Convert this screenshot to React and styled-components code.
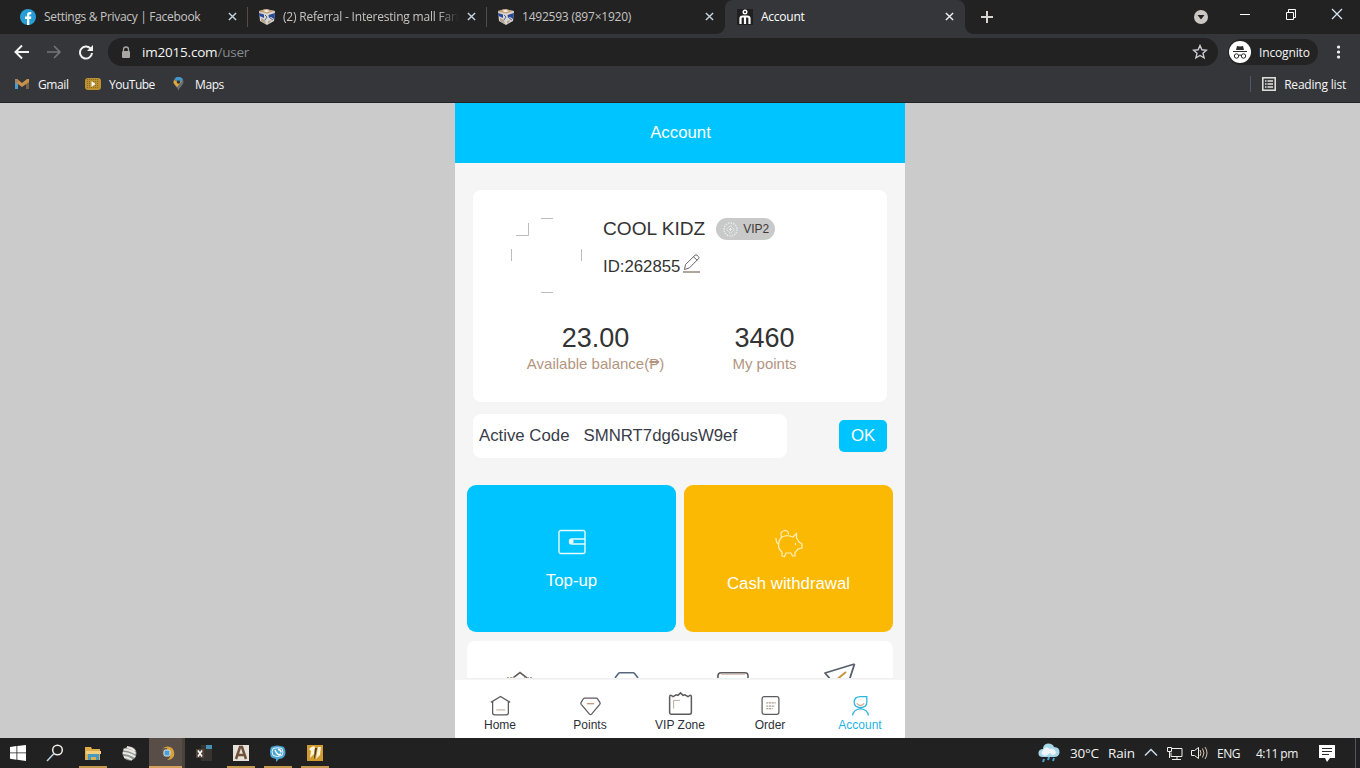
import React from 'react'
import styled, { createGlobalStyle, css } from 'styled-components'

const GlobalStyle = createGlobalStyle`
  * { box-sizing: border-box; }
  body { margin: 0; background: #cbcbcb; overflow: hidden; }
`

const Desktop = styled.div`
  width: 1360px;
  height: 768px;
  display: flex;
  flex-direction: column;
  background: #cbcbcb;
  font-family: "Open Sans", "Noto Sans", sans-serif;
  font-size: 12px;
  white-space: nowrap;
  svg { display: block; flex: none; }
`

// -------------------- browser ----------------

const TabStrip = styled.div`
  height: 34px;
  display: flex;
  background: #222222;
`

const Tab = styled.div`
  width: ${p => p.$w || 239}px;
  height: 34px;
  display: flex;
  align-items: center;
  padding: 0 11px 1px 20px;
  color: #c6c4c2;
  ${p => p.$inner && css`padding-left: 11px;`}
  ${p => p.$line && css`
    background: linear-gradient(#544c49, #544c49) right 7px / 1px 20px no-repeat;
  `}
  ${p => p.$active && css`
    padding-left: 12px;
    color: #ffffff;
    background: #35363a;
    border-radius: 8px 8px 0 0;
  `}
`

const TabTitle = styled.span`
  flex: 1;
  margin-left: 8px;
  margin-right: 6px;
  overflow: hidden;
  letter-spacing: ${p => p.$track || 0}px;
  ${p => p.$fade && css`
    margin-right: 8px;
    -webkit-mask-image: linear-gradient(90deg, #000 88%, transparent 100%);
    mask-image: linear-gradient(90deg, #000 88%, transparent 100%);
  `}
`

const TabFoot = styled.div`
  width: 8px;
  height: 8px;
  align-self: flex-end;
  background: radial-gradient(circle at ${p => (p.$left ? '0 0' : '100% 0')}, #222222 7.5px, #35363a 8px);
  margin-left: ${p => (p.$left ? '-8px' : '0')};
`

const NewTab = styled.div`
  flex: 1;
  display: flex;
  align-items: center;
  padding-left: 8px;
`

const WindowButtons = styled.div`
  display: flex;
  padding-right: 17px;
  padding-top: 8px;
`

const Toolbar = styled.div`
  height: 36px;
  display: flex;
  align-items: center;
  padding: 0 10px 0 14px;
  background: #35363a;
  color: #f4f4f4;
`

const AddressBar = styled.div`
  width: 1110px;
  height: 28px;
  margin-left: 14px;
  padding: 0 10px 0 12px;
  display: flex;
  align-items: center;
  border-radius: 14px;
  background: #222222;
  font-size: 13.5px;
`

const Url = styled.span`
  flex: 1;
  margin-left: 10px;
  letter-spacing: -0.2px;
  color: #f4f4f4;
  em { font-style: normal; color: #858991; }
`

const Incognito = styled.div`
  width: 90px;
  height: 26px;
  margin-left: 10px;
  display: flex;
  align-items: center;
  gap: 8px;
  padding-left: 1px;
  border-radius: 13px;
  background: #232324;
  letter-spacing: -0.15px;
`

const Bookmarks = styled.div`
  height: 33px;
  display: flex;
  align-items: flex-start;
  padding: 6px 14px 0 14px;
  background: #35363a;
  border-bottom: 1px solid #232427;
  color: #f6f6f6;
`

const Bookmark = styled.div`
  display: flex;
  align-items: center;
  width: ${p => (p.$w ? p.$w + 'px' : 'auto')};
  height: 16px;
  line-height: 15px;
  gap: 8px;
  letter-spacing: ${p => p.$track || 0}px;
`

const ReadingList = styled(Bookmark)`
  margin-left: auto;
  padding-left: 11px;
  border-left: 1px solid #4b5b69;
`

// -------------------- phone page ----------------

const Viewport = styled.main`
  height: 635px;
  display: flex;
  justify-content: center;
`

const Phone = styled.div`
  width: 450px;
  height: 635px;
  display: flex;
  flex-direction: column;
  background: #f5f5f5;
  color: #333333;
  font-family: "Liberation Sans", Arial, sans-serif;
  font-size: 16.8px;
`

const PageHeader = styled.header`
  height: 60px;
  display: flex;
  align-items: center;
  justify-content: center;
  padding-left: 1px;
  background: #00c4ff;
  color: #ffffff;
`

const Content = styled.div`
  height: 517px;
  padding: 27px 12px 0;
  overflow: hidden;
`

const Card = styled.section`
  height: 212px;
  margin: 0 6px;
  padding: 28px 38px 0;
  border-radius: 8px;
  background: #ffffff;
`

const Profile = styled.div`
  display: flex;
  height: 76px;
`

const Identity = styled.div`
  margin-left: 20px;
`

const NameLine = styled.div`
  display: flex;
  align-items: center;
  height: 22px;
  font-size: 19.1px;
`

const VipBadge = styled.span`
  width: 59px;
  height: 22px;
  margin-left: 11px;
  padding-left: 7px;
  display: flex;
  align-items: center;
  gap: 5px;
  border-radius: 11px;
  background: #c9c9c9;
  color: #3f3a38;
  font-size: 12px;
`

const IdLine = styled.div`
  display: flex;
  align-items: center;
  margin-top: 15px;
  gap: 3px;
  height: 22px;
  line-height: 22px;
  padding-top: 2px;
  svg { margin-top: -7px; }
`

const Stats = styled.div`
  display: flex;
  margin: 28px 0 0 0;
`

const Stat = styled.div`
  width: 169px;
  text-align: center;
`

const Amount = styled.div`
  height: 31px;
  line-height: 33px;
  font-size: 27px;
`

const Caption = styled.div`
  height: 20px;
  line-height: 22px;
  font-size: 15px;
  color: #b3957f;
`

const CodeRow = styled.div`
  display: flex;
  align-items: center;
  justify-content: space-between;
  margin: 12px 6px 0;
`

const CodeField = styled.div`
  width: 314px;
  height: 44px;
  display: flex;
  align-items: center;
  padding: 0 6px;
  gap: 14px;
  border-radius: 8px;
  background: #ffffff;
  color: #393c48;
`

const OkButton = styled.button`
  width: 48px;
  height: 32px;
  padding: 0;
  border: 0;
  border-radius: 5px;
  background: #00c4ff;
  color: #ffffff;
  font: inherit;
`

const Actions = styled.div`
  display: grid;
  grid-template-columns: 1fr 1fr;
  gap: 8px;
  margin-top: 27px;
`

const Action = styled.div`
  height: 147px;
  display: flex;
  flex-direction: column;
  align-items: center;
  padding-top: 44px;
  gap: 16px;
  border-radius: 9px;
  background: ${p => p.$color};
  color: #ffffff;
`

const Services = styled.div`
  display: grid;
  grid-template-columns: repeat(4, 1fr);
  justify-items: center;
  height: 38px;
  margin-top: 9px;
  padding-top: 22px;
  overflow: hidden;
  border-radius: 8px 8px 0 0;
  background: #ffffff;
  border-bottom: 1px solid #f0f0f0;
`

const BottomNav = styled.nav`
  height: 58px;
  display: grid;
  grid-template-columns: repeat(5, 1fr);
  background: #ffffff;
`

const NavItem = styled.div`
  display: flex;
  flex-direction: column;
  align-items: center;
  justify-content: flex-end;
  padding-bottom: 5px;
  gap: 2px;
  font-size: 12px;
  line-height: 15px;
  color: ${p => (p.$active ? '#1fb4e6' : '#2d3038')};
`

// -------------------- taskbar ----------------

const Taskbar = styled.footer`
  height: 30px;
  display: flex;
  background: #212121;
  color: #f1f1f1;
`

const TaskButton = styled.div`
  width: 37px;
  height: 30px;
  display: flex;
  align-items: center;
  justify-content: center;
  padding-right: ${p => (p.$nudge ? 2 : 0)}px;
  ${p => p.$open && css`
    background: linear-gradient(#c39a4c, #c39a4c) center bottom / 28px 2px no-repeat;
  `}
  ${p => p.$focus && css`
    background: linear-gradient(#d4a15d, #d4a15d) center bottom / 100% 2px no-repeat, #594d47;
    border-left: 1px solid #212121;
    border-right: 3px solid #49423d;
    padding-left: 4px;
  `}
`

const Tray = styled.div`
  flex: 1;
  display: flex;
  align-items: center;
  justify-content: flex-end;
`

const TrayText = styled.span`
  width: ${p => p.$w}px;
  margin-left: ${p => p.$gap || 0}px;
  font-size: ${p => p.$size || 12}px;
  letter-spacing: ${p => p.$track || 0}px;
`

const ShowDesktop = styled.div`
  width: 5px;
  height: 30px;
  margin-left: 20px;
  border-left: 1px solid #4c5965;
`

function Close({ size = 9, color = '#c3d2dd', width = 1.6 }) {
    return (
        <svg width={size} height={size} viewBox="0 0 10 10" stroke={color} strokeWidth={width}>
            <path d="M1 1l8 8M9 1l-8 8" />
        </svg>
    )
}

function BoxIcon() {
    return (
        <svg width="16" height="16" viewBox="0 0 16 16">
            <path d="M0 2l7-2 9 2-1 10-7 4-7-4z" fill="#d9d5cf" />
            <path d="M0 2.500L6 0l9 2-7 2.500z" fill="#c79a67" />
            <path d="M4 1.800L8 .8l3 1.400-4 1z" fill="#eceff2" />
            <path d="M0 4l5 1.500v3.500L.5 7zM9.500 6L16 4l-1 6-3-2-2 1z" fill="#28499a" />
            <path d="M2 9l4 2 1 4-5-3zM9 12l4-1-4 4z" fill="#b4a28f" />
            <path d="M6 6l2 2-2 3M11 9l3 2" fill="none" stroke="#28499a" strokeWidth=".8" />
        </svg>
    )
}

function PersonFavicon() {
    return (
        <svg width="16" height="16" viewBox="0 0 16 16">
            <path fill="#202020" d="M0 0h16v16H0z" />
            <circle cx="8" cy="3" r="1.800" fill="none" stroke="#fff" strokeWidth="1.400" />
            <path d="M3.500 15V9.500Q3.500 7.500 5.700 7.500h4.600q2.200 0 2.200 2V15M8 8v7" fill="none" stroke="#fff" strokeWidth="2.200" />
        </svg>
    )
}

function BrowserTabs() {
    return (
        <TabStrip>
            <Tab $line $w={248}>
                <svg width="16" height="16" viewBox="0 0 16 16">
                    <circle cx="8" cy="8" r="8" fill="#269ed6" />
                    <path d="M7 16v-6H5V7.600h2V6q0-3 3-3h1.300v2.200h-1.100Q9.300 5.200 9.300 6.200V7.600h2L11 10H9.300v6z" fill="#fff" />
                </svg>
                <TabTitle $track={-0.31}>Settings &amp; Privacy | Facebook</TabTitle>
                <Close />
            </Tab>
            <Tab $inner $line>
                <BoxIcon />
                <TabTitle $fade $track={-0.2}>(2) Referral - Interesting mall Farm</TabTitle>
                <Close />
            </Tab>
            <Tab $inner $w={238}>
                <BoxIcon />
                <TabTitle $track={-0.22}>1492593 (897×1920)</TabTitle>
                <Close />
            </Tab>
            <TabFoot $left />
            <Tab $active $w={240}>
                <PersonFavicon />
                <TabTitle $track={-0.25}>Account</TabTitle>
                <Close color="#f1ede8" />
            </Tab>
            <TabFoot />
            <NewTab>
                <svg width="12" height="12" viewBox="0 0 12 12" stroke="#d8d4cf" strokeWidth="2">
                    <path d="M6 0v12M0 6h12" />
                </svg>
            </NewTab>
            <WindowButtons>
                <svg width="150" height="18" viewBox="0 0 150 18" fill="none" stroke="#fff">
                    <circle cx="8" cy="9" r="7" fill="#cbc8c4" stroke="none" />
                    <path d="M4.500 7h7L8 11.500z" fill="#222" stroke="none" />
                    <path d="M47 6.500h10M93.500 4.500h7v7h-7zM95.500 4.500v-3h7v8h-2" />
                    <path d="M139 1l10 10M149 1l-10 10" stroke="#d5e5f3" strokeWidth="1.300" />
                </svg>
            </WindowButtons>
        </TabStrip>
    )
}

function BrowserToolbar() {
    return (
        <Toolbar>
            <svg width="80" height="16" viewBox="0 0 80 16" fill="none" stroke="#f2f2f2" strokeWidth="2">
                <path d="M15 8H2M8 1.500L1.500 8 8 14.500" />
                <path d="M33 8h13M40 2l6 6-6 6" stroke="#77777a" strokeWidth="1.500" />
                <path d="M76.300 4.300A6 6 0 1 0 78 9" />
                <path d="M79 1v6h-6z" fill="#f2f2f2" stroke="none" />
            </svg>
            <AddressBar>
                <svg width="12" height="13" viewBox="0 0 12 13">
                    <path d="M3.500 5V3.500a2.500 2.500 0 0 1 5 0V5" fill="none" stroke="#a3a7ac" strokeWidth="1.300" />
                    <rect x="2" y="5" width="8" height="7" rx="1" fill="#a9a6a3" />
                </svg>
                <Url>im2015.com<em>/user</em></Url>
                <svg width="16" height="16" viewBox="0 0 16 16">
                    <path d="M8 1.500l1.900 4.300 4.600.4-3.500 3.100 1.100 4.600L8 11.500l-4.100 2.400L5 9.300 1.500 6.200l4.600-.4z" fill="none" stroke="#cfccd0" strokeWidth="1.400" />
                </svg>
            </AddressBar>
            <Incognito>
                <svg width="22" height="22" viewBox="0 0 22 22">
                    <circle cx="11" cy="11" r="11" fill="#fff" />
                    <path d="M7 9l1-4q3 .8 6 0l1 4z" fill="#2b2b2d" />
                    <path d="M4 10.500h14M9.500 14.500q1.500-1 3 0" fill="none" stroke="#2b2b2d" />
                    <circle cx="7.500" cy="15" r="2.200" fill="none" stroke="#2b2b2d" />
                    <circle cx="14.500" cy="15" r="2.200" fill="none" stroke="#2b2b2d" />
                </svg>
                Incognito
            </Incognito>
            <svg width="22" height="14" viewBox="0 0 22 14" fill="#eee">
                <circle cx="20.500" cy="2" r="1.600" /><circle cx="20.500" cy="7" r="1.600" /><circle cx="20.500" cy="12" r="1.600" />
            </svg>
        </Toolbar>
    )
}

function BookmarkBar() {
    return (
        <Bookmarks>
            <Bookmark $w={71} $track={-0.4}>
                <svg width="16" height="12" viewBox="0 0 16 12">
                    <path d="M1 2v9h3V4z" fill="#4a9bd0" />
                    <path d="M12 4v7h3V2z" fill="#77604f" />
                    <path d="M1 1h2l5 4 5-4h2v3L8 9 1 4z" fill="#c9924a" />
                    <path d="M1 1h3v4L1 4z" fill="#a9805d" />
                </svg>
                Gmail
            </Bookmark>
            <Bookmark $w={86} $track={-0.5}>
                <svg width="16" height="12" viewBox="0 0 16 12">
                    <rect width="16" height="12" rx="3" fill="#bd912f" />
                    <path d="M2 1.500h12M2 3.500h12M2 5.500h12M2 7.500h12M2 9.500h12" stroke="#7c5f26" strokeWidth=".8" strokeDasharray="1 1" />
                    <path d="M6.500 3v6l4-3z" fill="#fff" />
                </svg>
                YouTube
            </Bookmark>
            <Bookmark $track={-0.4}>
                <svg width="16" height="15" viewBox="0 0 16 15">
                    <path d="M2.500 5a5 5 0 0 1 10 0c0 3-4 5-5 9-1-4-5-6-5-9z" fill="#676e74" />
                    <path d="M3.500 2a5 5 0 0 1 8.500.5L8 6z" fill="#4296cc" />
                    <path d="M3 3L2.500 6 6 10l5-6-4 1z" fill="#e2a83b" />
                    <circle cx="7.500" cy="5" r="1.800" fill="#35363a" />
                </svg>
                Maps
            </Bookmark>
            <ReadingList $track={-0.2}>
                <svg width="14" height="14" viewBox="0 0 14 14" fill="none" stroke="#e7e5e2">
                    <rect x=".8" y=".8" width="12.400" height="12.400" strokeWidth="1.500" />
                    <path d="M3 4h1.500M5.500 4H11M3 7h1.500M5.500 7H11M3 10h1.500M5.500 10H11" strokeWidth="1.300" />
                </svg>
                Reading list
            </ReadingList>
        </Bookmarks>
    )
}

function ProfileCard() {
    return (
        <Card>
            <Profile>
                <svg width="72" height="76" viewBox="0 0 72 76" fill="none" stroke="#bdbdbd">
                    <path d="M30 .5h12M30 74.500h12M.5 31v12M70.500 31v12M5 17.500h12.500V5" />
                </svg>
                <Identity>
                    <NameLine>
                        COOL KIDZ
                        <VipBadge>
                            <svg width="15" height="15" viewBox="0 0 15 15" fill="none" stroke="#e4f1ee">
                                <circle cx="7.500" cy="7.500" r="6.500" strokeWidth="1.500" strokeDasharray="1.300 1.200" />
                                <path d="M7.500 3.500l4 4-4 4-4-4z" strokeDasharray="2 .8" />
                                <path d="M7.500 6v3M6 7.500h3" />
                            </svg>
                            VIP2
                        </VipBadge>
                    </NameLine>
                    <IdLine>
                        ID:262855
                        <svg width="18" height="19" viewBox="0 0 18 19" fill="none" stroke="#67636a">
                            <path d="M1.500 15.500l1-5L12 1.300q1-.8 2 0l1.600 1.500q.8.900 0 1.800L6.300 14z M10.500 2.800l3.800 3.600" />
                            <path d="M0 18h17" stroke="#8a7665" strokeWidth="1.300" />
                        </svg>
                    </IdLine>
                </Identity>
            </Profile>
            <Stats>
                <Stat>
                    <Amount>23.00</Amount>
                    <Caption>Available balance(₱)</Caption>
                </Stat>
                <Stat>
                    <Amount>3460</Amount>
                    <Caption>My points</Caption>
                </Stat>
            </Stats>
        </Card>
    )
}

function ServiceIcons() {
    return (
        <Services>
            <svg width="34" height="34" viewBox="0 0 34 34" fill="none" stroke="#66615f" strokeWidth="1.600">
                <path d="M10 15l7-5.500 7 5.500" /><path d="M4 14.500h9M21 14.500h9" stroke="#aaa39c" strokeWidth="1.200" strokeDasharray="2 1" />
            </svg>
            <svg width="34" height="34" viewBox="0 0 34 34" fill="none" stroke="#576779" strokeWidth="1.600">
                <path d="M5 15l3-4q1-1.200 2-1.200h13q1 0 2 1.200l3 4" />
            </svg>
            <svg width="34" height="34" viewBox="0 0 34 34" fill="none" stroke="#5f5a5c" strokeWidth="1.600">
                <rect x="2" y="9.800" width="30" height="24" rx="3" /><path d="M5 11.500h24" stroke="#d8b8a8" strokeWidth=".8" />
            </svg>
            <svg width="34" height="34" viewBox="0 0 34 34" fill="none" stroke="#57606b" strokeWidth="1.800" strokeLinejoin="round">
                <path d="M31.500 1L2 10l6 7M31.500 1L26 18" /><path d="M23 9L12 18" stroke="#c79643" strokeWidth="2" />
            </svg>
        </Services>
    )
}

const navItems = [
    {
        label: 'Home',
        icon: <path d="M.8 7l9.200-5.500L19.200 7M2.500 6.500V17q0 2 2 2h11q2 0 2-2V6.500" />,
        accent: <path d="M6 14.200h8.500" stroke="#cbb7a7" />,
    },
    {
        label: 'Points',
        icon: <path d="M4.500 3h11q.8 0 1.200.6l2.200 3.400q.6 1-.1 1.900L11 18.200q-1 1-2 0L1.200 8.900Q.5 8 1.100 7l2.200-3.400Q3.700 3 4.500 3z" />,
        accent: <path d="M6.500 8.300h7" stroke="#c09172" />,
    },
    {
        label: 'VIP Zone',
        size: 25,
        icon: <path d="M2.500 3.500L4 4.500 6.500 3 8 3.500 10 1.500l2 2L13.500 3 16 4.500l1.500-1q1.200-.2 1.200 1V17q0 1.500-1.500 1.500H2.800q-1.500 0-1.500-1.500V4.500q0-1.200 1.200-1z" />,
        accent: <path d="M4.500 14V7.500h5" stroke="#b9aca3" strokeWidth=".8" />,
    },
    {
        label: 'Order',
        icon: <rect x="2" y="1.500" width="16" height="17" rx="2" />,
        accent: <path d="M6 7.500h9M6 10.500h8M6 13h6" stroke="#aa9b8e" strokeDasharray="2 .6" />,
    },
    {
        label: 'Account',
        active: true,
        icon: <path d="M4 7q0-5.500 6-5.500h6V7q0 5-6 5T4 7zM2.500 19.500q.5-5.500 7.500-6.500 7 1 7.500 6.500" />,
        accent: <path d="M6.500 8q3.500 4 7 0" stroke="#d2a38c" />,
    },
]

function TaskApps() {
    return (
        <>
            <TaskButton $nudge>
                <svg width="16" height="16" viewBox="0 0 16 16" fill="#fff">
                    <path d="M0 2l6.500-.9v6.400H0zM7.300 1L16 0v7.500H7.300zM0 8.300h6.500v6.400L0 13.800zM7.300 8.300H16V16l-8.700-1.200z" />
                </svg>
            </TaskButton>
            <TaskButton $nudge>
                <svg width="18" height="18" viewBox="0 0 18 18" fill="none" stroke="#f3f0ec" strokeWidth="1.500">
                    <circle cx="11.500" cy="6" r="4.800" /><path d="M8 9.500L1 17" stroke="#bfd5e6" />
                </svg>
            </TaskButton>
            <TaskButton $open>
                <svg width="16" height="15" viewBox="0 0 16 15">
                    <path d="M0 1h6l1 2h8v11H0z" fill="#ddae4a" />
                    <path d="M1 5h15v3H1z" fill="#f1cf7d" />
                    <path d="M3 14V8h11v6h-3v-3H6v3z" fill="#439bc5" />
                </svg>
            </TaskButton>
            <TaskButton>
                <svg width="15" height="15" viewBox="0 0 15 15">
                    <circle cx="7.500" cy="7.500" r="7" fill="#8e9492" />
                    <path d="M1.500 3.500q6 0 12 4M.8 7q6 0 12.500 4M2 11q4 0 8 3M5 1q5 1 8 4" fill="none" stroke="#ece9e2" strokeWidth="1.800" />
                </svg>
            </TaskButton>
            <TaskButton $focus>
                <svg width="16" height="16" viewBox="0 0 16 16">
                    <path d="M3 3q5-3 9 0 3 3 2 8-2 4-7 4 4-2 3-7L5 5z" fill="#d7a03c" />
                    <path d="M2 3l5 0 1 4-4 5q-3-5-2-9z" fill="#6b5a4c" />
                    <rect x="4" y="5" width="6" height="6" rx="1.500" fill="#4ba1d5" stroke="#e4e9ec" />
                </svg>
            </TaskButton>
            <TaskButton>
                <svg width="16" height="16" viewBox="0 0 16 16">
                    <path d="M5 0h11v16H5z" fill="#373331" /><path d="M10 0h6v4h-6z" fill="#4590b7" />
                    <path d="M0 4h8v9H0z" fill="#57463e" /><path d="M2 5.500l4 6M6 5.500l-4 6" stroke="#fff" strokeWidth="1.500" />
                </svg>
            </TaskButton>
            <TaskButton $open>
                <svg width="16" height="16" viewBox="0 0 16 16">
                    <path fill="#e6e2d9" d="M0 0h16v16H0z" />
                    <path d="M3 14L7 2h2l4 12M5 10h6" fill="none" stroke="#70513c" strokeWidth="2.500" />
                </svg>
            </TaskButton>
            <TaskButton $open>
                <svg width="17" height="17" viewBox="0 0 17 17">
                    <path d="M2 2q6-3 13 0 3 6 0 10-2 2-5 2l-3 3v-3Q3 13 2 12q-2-5 0-10z" fill="#4aa5d3" />
                    <path d="M4 3.500q5-1.500 9 0 2 4 0 7-5 2-9 0-2-4 0-7z" fill="none" stroke="#e9f5fb" />
                    <path d="M6 5l1 2q1 2 3 3l2-1M9 4.500q3 0 3 3" fill="none" stroke="#fff" strokeWidth="1.500" />
                </svg>
            </TaskButton>
            <TaskButton $open>
                <svg width="16" height="16" viewBox="0 0 16 16">
                    <path fill="#d29b2f" d="M0 0h16v16H0z" />
                    <path d="M2 4q4-4 6-2L7 9l-4 4 1-7zM11 2l3 0-1 8-4 4z" fill="#fff4d9" />
                    <path d="M8 3l2 0-2 10-1 1z" fill="#4b3923" />
                </svg>
            </TaskButton>
        </>
    )
}

function SystemTray() {
    return (
        <Tray>
            <svg width="22" height="20" viewBox="0 0 22 20">
                <path d="M5 14Q0 14 .5 9.500 1 6 5 6q0-5 5-5.500 5 0 6 3.500 6 0 5.500 6-1 4-5 4z" fill="#a9d7ea" />
                <path d="M5 12q-3-2 0-5 3-5 7-1 5-1 6 4-3 4-6 0-4 4-7 2z" fill="#eff5f7" />
                <path d="M6 16l-1 3M11 14l-1 3M16 15l-1 3" stroke="#4ea7d2" strokeWidth="2" />
            </svg>
            <TrayText $w={30} $gap={10} $size={13.5} $track={-0.25}>30°C</TrayText>
            <TrayText $w={27} $gap={8} $size={13.5} $track={-0.2}>Rain</TrayText>
            <svg width="65" height="18" viewBox="0 0 65 18" fill="none" stroke="#efeeec" style={{ marginLeft: 9 }}>
                <path d="M1 11.500l6-6 6 6" stroke="#cbdce8" strokeWidth="1.500" />
                <path d="M28 4.500h10v8H27v-4M33 13v3M28 15.500h9M23.500 3.500h4v4h-4zM25.500 8v6" />
                <path d="M47.500 6.500h3l4-3v11l-4-3h-3z" />
                <path d="M56 6q2 3 0 6M58.500 4.500q3 4.500 0 9M61 3q4 6 0 12" stroke="#d8c5b6" />
            </svg>
            <TrayText $w={24} $gap={8} $track={-0.45}>ENG</TrayText>
            <TrayText $w={42} $gap={15} $track={-0.5}>4:11 pm</TrayText>
            <svg width="16" height="17" viewBox="0 0 16 17" style={{ marginLeft: 21 }}>
                <path d="M0 0h16v13h-5l-3 4-2-4H0z" fill="#fff" />
                <path d="M3 3.500h10M3 6.500h10M3 9.500h7" stroke="#292929" />
            </svg>
            <ShowDesktop />
        </Tray>
    )
}

export default function App() {
    return (
        <>
            <GlobalStyle />
            <Desktop>
                <BrowserTabs />
                <BrowserToolbar />
                <BookmarkBar />
                <Viewport>
                    <Phone>
                        <PageHeader>Account</PageHeader>
                        <Content>
                            <ProfileCard />
                            <CodeRow>
                                <CodeField>
                                    <span>Active Code</span>
                                    <span>SMNRT7dg6usW9ef</span>
                                </CodeField>
                                <OkButton>OK</OkButton>
                            </CodeRow>
                            <Actions>
                                <Action $color="#00c4ff">
                                    <svg width="28" height="26" viewBox="0 0 28 26" fill="none" stroke="#e8f9ff" strokeWidth="1.400">
                                        <rect x="1" y="1.500" width="26" height="23" rx="2" />
                                        <path d="M27 10H14a2.500 2.500 0 0 0 0 5h13" />
                                        <circle cx="13.500" cy="12.500" r="1.500" fill="#fff" />
                                    </svg>
                                    Top-up
                                </Action>
                                <Action $color="#fcb904">
                                    <svg width="28" height="29" viewBox="0 0 28 29" fill="none" stroke="#fff0bd" strokeWidth="1.200">
                                        <path d="M7 8q5-2.500 11 0l3.500-3.500V9q1.500 2 2.500 4l3 2v4l-4 1-3 3.500v3.500h-2.500l-1.500-3h-5L9.500 27.500 7 27v-4Q4 21 3.500 17 3.500 11 7 8z" />
                                        <path d="M3.500 15Q1 14 1 9M6.500 8Q4.500 2 10 1.500q3.500 0 3.500 4M20.500 14v2" />
                                    </svg>
                                    Cash withdrawal
                                </Action>
                            </Actions>
                            <ServiceIcons />
                        </Content>
                        <BottomNav>
                            {
                                navItems.map((item) =>
                                    <NavItem key={item.label} $active={item.active}>
                                        <svg width={item.size || 21} height={item.size || 21} viewBox="0 0 20 20" fill="none" stroke={item.active ? '#2eb5df' : '#5e5b5f'} strokeWidth="1.200">
                                            {item.icon}
                                            {item.accent}
                                        </svg>
                                        {item.label}
                                    </NavItem>
                                )
                            }
                        </BottomNav>
                    </Phone>
                </Viewport>
                <Taskbar>
                    <TaskApps />
                    <SystemTray />
                </Taskbar>
            </Desktop>
        </>
    )
}
